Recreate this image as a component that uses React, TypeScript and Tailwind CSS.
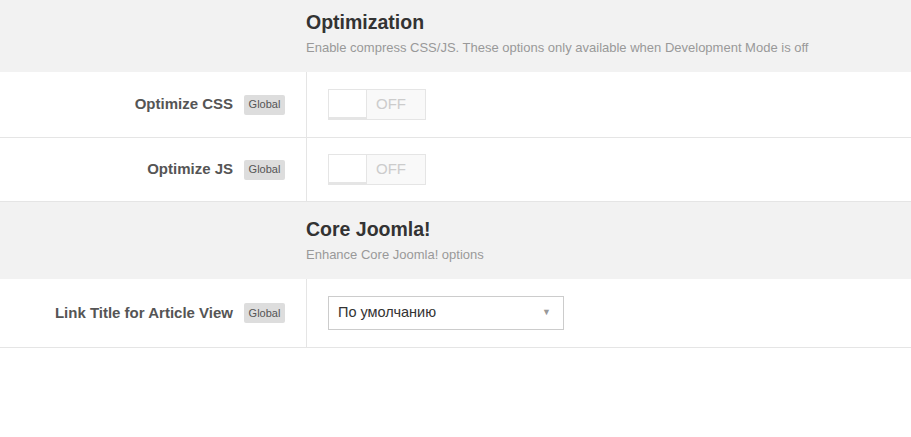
const font = { fontFamily: '"Liberation Sans", Arial, sans-serif' }

function Header({ title, desc, top }: { title: string; desc: string; top: string }) {
  return (
    <div className={`bg-[#f2f2f2] pl-[306px] pb-[15px] ${top}`}>
      <h2 className="text-[19.5px] leading-[24px] font-bold text-[#333]">{title}</h2>
      <p className="text-[13px] leading-[18px] mt-[5px] text-[#999]">{desc}</p>
    </div>
  )
}

function Badge() {
  return (
    <span className="ml-[11px] inline-flex items-center h-[20px] w-[41px] justify-center rounded-[2px] bg-[#ddd] text-[11px] text-[#555]">
      Global
    </span>
  )
}

function Row({ label, height, children }: { label: string; height: string; children: React.ReactNode }) {
  return (
    <div className={`flex border-b border-[#e5e5e5] ${height}`}>
      <div className="w-[307px] shrink-0 border-r border-[#e5e5e5] flex items-center justify-end pr-[21px]">
        <span className="text-[15px] font-bold text-[#555]">{label}</span>
        <Badge />
      </div>
      <div className="flex items-center pl-[21px]">{children}</div>
    </div>
  )
}

function Toggle() {
  return (
    <div className="flex h-[31px] w-[98px] border border-[#e5e5e5] bg-[#f9f9f9]">
      <div className="w-[38px] bg-white border-r border-[#e5e5e5] border-b-2 border-b-[#e5e5e5]" />
      <div className="flex-1 flex items-center pl-[9px] text-[15px] text-[#ccc]">OFF</div>
    </div>
  )
}

export default function App() {
  return (
    <div className="w-[911px] h-[437px] bg-white overflow-hidden" style={font}>
      <Header
        title="Optimization"
        desc="Enable compress CSS/JS. These options only available when Development Mode is off"
        top="pt-[10px]"
      />
      <Row label="Optimize CSS" height="h-[66px]">
        <Toggle />
      </Row>
      <Row label="Optimize JS" height="h-[64px]">
        <Toggle />
      </Row>
      <Header title="Core Joomla!" desc="Enhance Core Joomla! options" top="pt-[15px]" />
      <Row label="Link Title for Article View" height="h-[69px]">
        <div className="relative flex items-center h-[34px] w-[236px] border border-[#ccc] bg-white pl-[9px] text-[14.5px] text-[#333]">
          По умолчанию
          <span className="absolute right-[12px] top-[9px] text-[9px] text-[#999]">▼</span>
        </div>
      </Row>
    </div>
  )
}
